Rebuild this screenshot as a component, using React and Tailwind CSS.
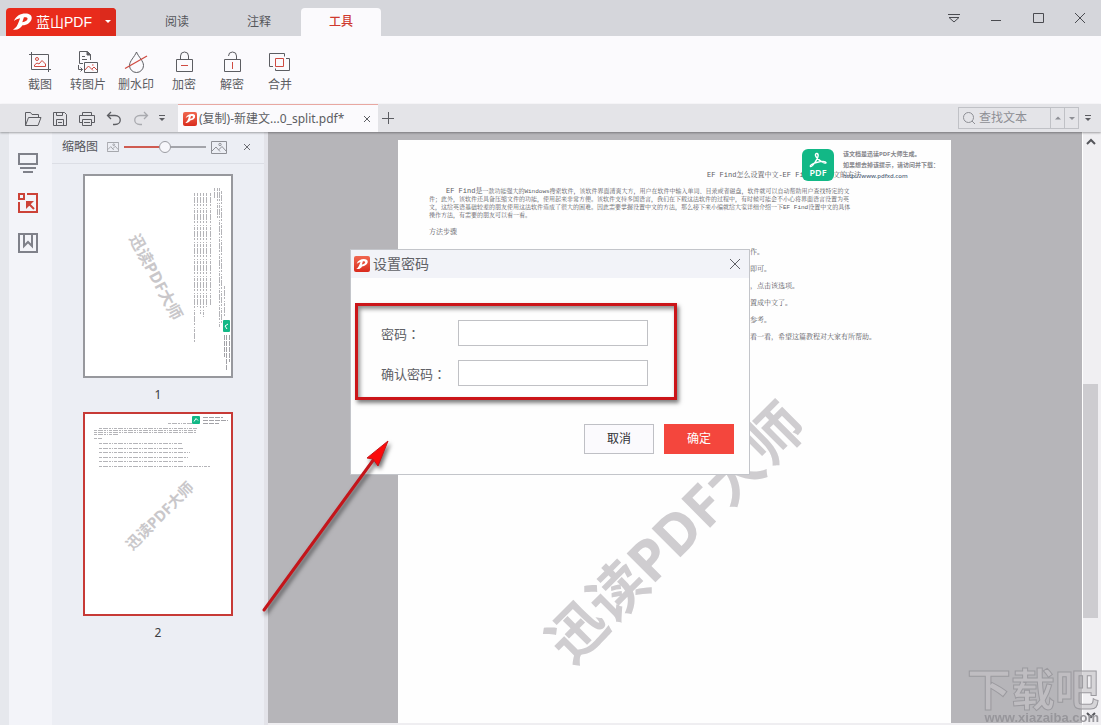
import { useState } from "react";

const WATERMARK = "迅读PDF大师";

/* ---------- icons ---------- */

function Icon({ size = 24, className = "", children }) {
  return (
    <svg
      width={size}
      height={size}
      viewBox={`0 0 ${size} ${size}`}
      fill="none"
      stroke="currentColor"
      className={className}
      aria-hidden="true"
    >
      {children}
    </svg>
  );
}

function LogoMark({ className }) {
  return (
    <svg viewBox="0 0 20 18" fill="currentColor" className={className} aria-hidden="true">
      <path
        fillRule="evenodd"
        d="M1 8C3 2.5 8 0 13 0c5 0 7.500 2.500 6.500 6-1 3.500-4.500 6-9.500 6.500C8 16 4 18 0 17c3-1.500 4.500-4 6-8l1.500-4C5 5.500 3 6.500 1 8zM11.500 4L9.800 9.200c3-.3 5-1.700 5.500-3.400.4-1.300-1.500-2-3.800-1.800z"
      />
    </svg>
  );
}

function AppBadge({ className }) {
  return (
    <span
      className={`flex shrink-0 items-center justify-center rounded-xs bg-linear-to-b from-[#f0664f] to-[#d9291c] text-white ${className}`}
    >
      <LogoMark className="h-2/3 w-3/4" />
    </span>
  );
}

function PdfStamp({ className }) {
  return (
    <svg viewBox="0 0 32 32" className={className} aria-hidden="true">
      <rect width="32" height="32" rx="6" fill="#12b886" />
      <path
        d="M15 4.500c2.500 1 .5 5-1.500 8C12 15 9.500 18 8.500 17.500c-1-1 2-3 6-4s9-1.500 9.500 0c.3 1-2 .8-4-.5S14 8.500 13.500 6.500c-.3-1.200.5-2.300 1.500-2z"
        fill="none"
        stroke="#fff"
        strokeWidth="1.400"
      />
      <text
        x="16"
        y="27"
        fill="#fff"
        fontSize="9"
        fontWeight="600"
        textAnchor="middle"
        fontFamily="Noto Sans, sans-serif"
      >
        PDF
      </text>
    </svg>
  );
}

const tools = [
  {
    label: "截图",
    icon: (
      <Icon>
        <path d="M3.5 2v17.500H23M1 4.500h19.500V22" />
        <g stroke="#cf4a41">
          <circle cx="9" cy="9" r="1.500" />
          <path d="M6.500 16.500h11v-2.500l-3.500-3.500-3 3.500-2-1-2.500 2z" />
        </g>
      </Icon>
    ),
  },
  {
    label: "转图片",
    icon: (
      <Icon>
        <path d="M7 13.500H3.500v-12h8l3 3v5.500M6 6.500h3M6 9.500h5" />
        <path d="M11 1.500v3.500h3.500z" fill="currentColor" />
        <path d="M8.500 12.500h13v10h-13zM2.500 15v4.500h4M4.500 17.500l2 2-2 2" />
        <path d="M9 20l3.500-4 4.500 4.500M16 19l2-2 3 3" stroke="#cf4a41" />
        <path d="M16 15h1.500" stroke="#cf4a41" />
      </Icon>
    ),
  },
  {
    label: "删水印",
    icon: (
      <Icon>
        <path d="M12.500 2C10.500 7 5.500 11 5.500 15.500a7 7 0 0 0 14 0C19.500 11 14.500 7 12.500 2z" />
        <path d="M1 18.500L23 6" stroke="#cf4a41" strokeWidth="1.300" />
      </Icon>
    ),
  },
  {
    label: "加密",
    icon: (
      <Icon>
        <path d="M4.500 9.500h16v12h-16zM8.500 9.500V6a4 4 0 0 1 8 0v3.500" />
        <path d="M9 15.500h7" stroke="#cf4a41" />
      </Icon>
    ),
  },
  {
    label: "解密",
    icon: (
      <Icon>
        <path d="M4.500 9.500h16v12h-16zM8.500 6a4 4 0 0 1 8 0v3.500" />
        <path d="M12.500 12v7" stroke="#cf4a41" />
      </Icon>
    ),
  },
  {
    label: "合并",
    icon: (
      <Icon>
        <path d="M5 16.500H1.500v-13h15v3M18 8.500h3.500v12h-14v-2" />
        <path d="M7.500 8.500h8v8h-8z" stroke="#cf4a41" />
      </Icon>
    ),
  },
];

const quickActions = [
  {
    label: "打开",
    icon: (
      <Icon size={18}>
        <path d="M1.500 15.500v-13h5l1.500 2h6.500v3M1.500 15.500l3-8h12.500l-3 8z" />
      </Icon>
    ),
  },
  {
    label: "保存",
    icon: (
      <Icon size={18}>
        <path d="M2.500 2.500h11l2 2v11h-13zM5.500 2.500v3h6v-3M5.500 15.500v-6h7v6M7 12.500h4" />
      </Icon>
    ),
  },
  {
    label: "打印",
    icon: (
      <Icon size={18}>
        <path d="M4.500 5.500v-3h9v3M4.500 12.500h-3v-7h15v7h-3M4.500 9.500h9v6h-9zM6 12.500h6" />
      </Icon>
    ),
  },
  {
    label: "撤销",
    icon: (
      <Icon size={18}>
        <path d="M6 2L2.500 5.500 6 9M2.500 5.500H10c7 0 7 9 0 9H8" strokeWidth="1.300" />
      </Icon>
    ),
  },
  {
    label: "重做",
    icon: (
      <Icon size={18} className="text-[#a9aaaf]">
        <path d="M12 2l3.500 3.500L12 9M15.500 5.500H8c-7 0-7 9 0 9h2" strokeWidth="1.300" />
      </Icon>
    ),
  },
];

function MoreIcon() {
  return (
    <Icon size={8}>
      <path d="M1 1.500h6" />
      <path d="M1 4h6L4 7z" fill="currentColor" stroke="none" />
    </Icon>
  );
}

function CloseIcon({ size }) {
  const end = size - 1;
  return (
    <Icon size={size}>
      <path d={`M1 1L${end} ${end}M${end} 1L1 ${end}`} />
    </Icon>
  );
}

function PictureIcon({ className }) {
  return (
    <svg viewBox="0 0 16 13" fill="none" stroke="currentColor" className={className} aria-hidden="true">
      <path d="M.5.5h15v12H.5zM1 10l4-4 4 4.500M7.500 9L11 5.500 15 10" />
      <circle cx="9" cy="3.500" r="1.200" />
    </svg>
  );
}

/* ---------- top bars ---------- */

function TitleBar() {
  const [active, setActive] = useState("工具");

  return (
    <header className="flex h-9 shrink-0 items-end bg-[#d5d6db] pl-1.5">
      <button className="flex h-7 w-[110px] overflow-hidden rounded-t-sm bg-[#e92b1b] text-sm text-white">
        <span className="flex h-full flex-1 items-center gap-1 pl-[7px] leading-5">
          <LogoMark className="h-[18px] w-[19px]" />
          <span className="font-['Liberation_Sans','Noto_Sans_CJK_SC',sans-serif] whitespace-nowrap">
            蓝山PDF
          </span>
        </span>
        <span className="flex h-full w-4 items-center justify-center bg-[#dc2a1c]">
          <Icon size={6}>
            <path d="M0 1h6L3 4z" fill="currentColor" stroke="none" />
          </Icon>
        </span>
      </button>

      <nav className="ml-[21px] flex gap-0.5">
        {["阅读", "注释", "工具"].map((tab) => (
          <button
            key={tab}
            onClick={() => setActive(tab)}
            className={`h-7 w-20 rounded-t text-xs ${
              active === tab ? "bg-[#fbfafd] font-medium text-[#cf3a30]" : "text-[#55565b]"
            }`}
          >
            {tab}
          </button>
        ))}
      </nav>

      <div className="ml-auto flex self-stretch text-[#4a4b50]">
        <button aria-label="选项" className="flex w-[42px] items-center justify-center">
          <Icon size={12}>
            <path d="M0 2.500h12M1 5.500h10L6 10z" />
          </Icon>
        </button>
        <button aria-label="最小化" className="flex w-[42px] items-center justify-center">
          <Icon size={12}>
            <path d="M1 8.500h10" />
          </Icon>
        </button>
        <button aria-label="最大化" className="flex w-[42px] items-center justify-center">
          <Icon size={12}>
            <path d="M1.500 1.500h10v9h-10z" />
          </Icon>
        </button>
        <button aria-label="关闭" className="flex w-[42px] items-center justify-center">
          <CloseIcon size={12} />
        </button>
      </div>
    </header>
  );
}

function Ribbon() {
  return (
    <div className="flex h-17 shrink-0 bg-[#fbfafd] pt-3.5 pl-4 text-[#5c5d62]">
      {tools.map((tool) => (
        <button key={tool.label} className="flex w-12 flex-col items-center gap-[3px]">
          {tool.icon}
          <span className="text-xs leading-4 whitespace-nowrap">{tool.label}</span>
        </button>
      ))}
    </div>
  );
}

function Toolbar() {
  return (
    <div className="z-10 flex h-7 shrink-0 items-stretch bg-[#e4e4e8] pl-[19px] text-[#5c5d62] shadow-[0_1px_2px_#00000055]">
      {quickActions.map((action) => (
        <button
          key={action.label}
          aria-label={action.label}
          className="flex w-[27px] items-center justify-center pt-0.5"
        >
          {action.icon}
        </button>
      ))}
      <button aria-label="更多" className="flex w-4 items-center justify-center">
        <MoreIcon />
      </button>

      <div className="ml-2 flex w-[200px] items-center border-t border-[#e8a7a1] bg-[#fbfafd] pr-1.5 pl-[5px]">
        <AppBadge className="size-3.5" />
        <span className="ml-0.5 flex-1 text-xs whitespace-nowrap">(复制)-新建文...0_split.pdf*</span>
        <button aria-label="关闭标签" className="flex w-2.5 justify-center">
          <CloseIcon size={8} />
        </button>
      </div>
      <button aria-label="新建标签" className="flex w-5 items-center justify-center">
        <Icon size={12}>
          <path d="M0 6.500h12M6.500 0v12" />
        </Icon>
      </button>

      <form className="my-[3px] ml-auto flex w-[121px] border border-[#c0c1c6] text-[#8e8f95]">
        <label htmlFor="find" className="flex w-5 shrink-0 items-center justify-center">
          <Icon size={14}>
            <circle cx="6.500" cy="6.500" r="5" />
            <path d="M10 10l3 3" />
          </Icon>
        </label>
        <input
          id="find"
          placeholder="查找文本"
          className="w-0 min-w-0 flex-1 text-xs outline-none placeholder:text-[#8e8f95]"
        />
        <button type="button" aria-label="上一个" className="flex w-3.5 items-center justify-center border-l border-[#c0c1c6]">
          <Icon size={6}>
            <path d="M0 4.500h6L3 1.500z" fill="currentColor" stroke="none" />
          </Icon>
        </button>
        <button type="button" aria-label="下一个" className="flex w-3.5 items-center justify-center border-l border-[#c0c1c6]">
          <Icon size={6}>
            <path d="M0 2h6L3 5z" fill="currentColor" stroke="none" />
          </Icon>
        </button>
      </form>
      <button aria-label="查找选项" className="mr-1 flex w-[18px] items-center justify-center">
        <MoreIcon />
      </button>
    </div>
  );
}

/* ---------- left side ---------- */

function SideNav() {
  return (
    <nav className="flex w-[52px] shrink-0 flex-col items-center gap-5 border-l-[9px] border-[#e6e8ed] bg-[#f3f4f9] pt-[21px] pr-1.5 text-[#7f818a]">
      <button aria-label="页面">
        <Icon size={20}>
          <path d="M1 1h18v10H1zM2 15h16M5 19h10" strokeWidth="2" />
        </Icon>
      </button>
      <button aria-label="缩略图" className="text-[#cc4238]">
        <Icon size={20}>
          <path d="M1 1h5v5H1zM9 1h10v18H1V9M16 16L10 10" strokeWidth="2" />
          <path d="M8 8h8l-8 8z" fill="currentColor" stroke="none" />
        </Icon>
      </button>
      <button aria-label="书签">
        <Icon size={20}>
          <path d="M1 1h18v18H1zM6 1v12l4-4 4 4V1" strokeWidth="2" />
        </Icon>
      </button>
    </nav>
  );
}

// text rows of the upright miniature: [start, end, y]
const uprightRows = [
  [83, 108, 9],
  [14, 112, 14],
  [9, 112, 16],
  [9, 112, 18],
  [9, 33, 20],
  [9, 17, 24],
  [14, 97, 29],
  [14, 98, 34],
  [14, 105, 38],
  [14, 103, 43],
  [14, 98, 47],
  [14, 125, 52],
];

// text columns of the turned miniature: [start, end, x]
const turnedRows = [
  [17, 168, 109],
  [17, 131, 112],
  [17, 138, 115],
  [17, 141, 118],
  [17, 131, 121],
  [17, 129, 125],
  [12, 22, 129],
  [12, 44, 132],
  [12, 152, 134],
  [15, 149, 136],
  [110, 142, 139],
];

function UprightMini() {
  return (
    <>
      <g stroke="#b4b4b8" strokeDasharray="3 1 5 1 2 1 1 1">
        {uprightRows.map(([start, end, y]) => (
          <path key={y} d={`M${start} ${y}.5H${end}`} />
        ))}
      </g>
      <path d="M118 3.500h20M118 6.500h25M118 9.500h16" stroke="#a2a2a7" strokeDasharray="5 1" />
      <rect x="107" y="2" width="8" height="8" rx="1" fill="#12b886" />
      <path d="M109 7.500l2-3 2 2" fill="none" stroke="#fff" />
    </>
  );
}

function TurnedMini() {
  return (
    <>
      <g stroke="#b4b4b8" strokeDasharray="3 1 6 1 2 2 1 1">
        {turnedRows.map(([start, end, x]) => (
          <path key={x} d={`M${x}.5 ${start}V${end}`} />
        ))}
      </g>
      <path d="M144.500 159v27M141.500 159v36M139.500 159v22" stroke="#a2a2a7" strokeDasharray="5 1" />
      <rect x="138" y="144" width="7" height="12" rx="1" fill="#12b886" />
      <path d="M143 148l-3 2 2 3" fill="none" stroke="#fff" />
    </>
  );
}

function Thumbnail({ page, turned, selected, onSelect }) {
  return (
    <figure className="flex flex-col items-center">
      <button
        onClick={onSelect}
        aria-label={`第${page}页`}
        className={`relative h-[204px] w-[150px] overflow-hidden border-2 bg-white ${
          selected ? "border-[#c73a36]" : "border-[#97989d]"
        }`}
      >
        <svg viewBox="0 0 146 200" className="size-full" aria-hidden="true">
          {turned ? <TurnedMini /> : <UprightMini />}
        </svg>
        <span
          className={`absolute inset-0 flex items-center justify-center pt-1 font-bold text-[#c9c7ca] ${
            turned ? "rotate-62 text-base" : "-rotate-45 text-[15px]"
          }`}
        >
          {WATERMARK}
        </span>
      </button>
      <figcaption className="mt-[9px] h-[25px] text-xs text-[#3c3d41]">{page}</figcaption>
    </figure>
  );
}

function ThumbnailPanel() {
  const [selected, setSelected] = useState(2);

  return (
    <aside className="flex w-[216px] shrink-0 flex-col border-r-4 border-[#e3e3e9] bg-[#eceef4]">
      <div className="flex h-8 shrink-0 items-center border-b border-[#dcdee5] pr-3 pb-px pl-2.5 text-[#8f9096]">
        <label htmlFor="thumb-size" className="mr-[9px] text-xs text-[#55565b]">
          缩略图
        </label>
        <PictureIcon className="h-2.5 w-3" />
        <input
          id="thumb-size"
          type="range"
          defaultValue="50"
          className="mx-[5px] h-0.5 w-[82px] appearance-none bg-linear-to-r from-[#cf5b51] from-50% to-[#a3a4aa] to-50% [&::-webkit-slider-thumb]:size-3 [&::-webkit-slider-thumb]:appearance-none [&::-webkit-slider-thumb]:rounded-full [&::-webkit-slider-thumb]:border [&::-webkit-slider-thumb]:border-[#9c9da3] [&::-webkit-slider-thumb]:bg-[#f7f7fb]"
        />
        <PictureIcon className="h-[13px] w-4" />
        <button aria-label="关闭面板" className="ml-auto flex w-2.5 justify-center text-[#6b6c72]">
          <CloseIcon size={8} />
        </button>
      </div>
      <div className="flex flex-col items-center pt-2.5">
        <Thumbnail page={1} turned selected={selected === 1} onSelect={() => setSelected(1)} />
        <Thumbnail page={2} selected={selected === 2} onSelect={() => setSelected(2)} />
      </div>
    </aside>
  );
}

/* ---------- document ---------- */

const steps = [
  "作。",
  "即可。",
  "，点击该选项。",
  "置成中文了。",
  "参考。",
  "看一看，希望这篇教程对大家有所帮助。",
];

function DocumentPage() {
  return (
    <article className="relative mx-auto h-[783px] w-[553px] max-w-full bg-[#fefefe] pt-[30px] pl-[31px] font-['Liberation_Mono','Noto_Serif_CJK_SC','Noto_Sans_CJK_SC',monospace] text-[6px] leading-[8px] whitespace-nowrap text-[#5a5a5e]">
      <h1 className="pl-[278px] text-[7px] leading-[10px]">
        EF Find怎么设置中文-EF Find设置中文的方法
      </h1>
      <p className="mt-[7px] indent-[17px]">
        <span className="text-[7px]">EF Find是</span>
        一款功能强大的Windows搜索软件，该软件界面清爽大方，用户在软件中输入单词、目录或者磁盘，软件就可以自动帮助用户查找特定的文
      </p>
      <p>
        件；此外，该软件还具备压缩文件的功能，使用起来非常方便。该软件支持多国语言，我们在下载这法软件的过程中，有时候可能会不小心将界面语言设置为英
      </p>
      <p>
        文，这给英语基础较差的朋友使用这法软件造成了很大的困难。因此需要掌握设置中文的方法，那么接下来小编就给大家详细介绍一下EF Find设置中文的具体
      </p>
      <p>操作方法，有需要的朋友可以看一看。</p>
      <h2 className="mt-[7px] text-[7px] leading-[10px]">方法步骤</h2>
      <ol className="mt-[7px] pl-[321px] text-[7px] leading-[17px]">
        {steps.map((step) => (
          <li key={step}>{step}</li>
        ))}
      </ol>

      <div className="absolute top-[9px] right-2 flex gap-[9px] font-['Noto_Sans','Noto_Sans_CJK_SC',sans-serif] font-bold text-[#85858a]">
        <PdfStamp className="size-8" />
        <div className="w-[100px] leading-[11px]">
          <p>该文档是迅读PDF大师生成。</p>
          <p>如果想去掉该提示，请访问并下载：</p>
          <a href="#download" className="block font-medium text-[#4f5f78]">
            http://www.pdfxd.com
          </a>
        </div>
      </div>
      <div className="absolute inset-0 flex -rotate-45 items-center justify-center font-['Noto_Sans','Noto_Sans_CJK_SC',sans-serif] text-[57px] font-bold text-[#cfcdd0]">
        {WATERMARK}
      </div>
    </article>
  );
}

function Scrollbar() {
  return (
    <div className="flex w-[19px] shrink-0 flex-col items-center border-l border-white bg-[#f0eff2] pr-0.5 text-[#55565b]">
      <button aria-label="向上滚动" className="flex h-5 items-center">
        <Icon size={10}>
          <path d="M1 7l4-4 4 4" strokeWidth="2" />
        </Icon>
      </button>
      <div className="flex w-full flex-1 flex-col">
        <div className="flex-[232]" />
        <div className="w-[15px] flex-[234] bg-[#cdccd0]" />
        <div className="flex-[87]" />
      </div>
      <button aria-label="向下滚动" className="flex h-5 items-center">
        <Icon size={10}>
          <path d="M1 3l4 4 4-4" strokeWidth="2" />
        </Icon>
      </button>
    </div>
  );
}

/* ---------- dialog ---------- */

function PasswordField({ id, label }) {
  return (
    <div className="flex items-center">
      <label htmlFor={id} className="w-[77px] pt-0.5">
        {label}
        <span className="font-['Noto_Sans_CJK_TC',sans-serif]" lang="zh-TW">：</span>
      </label>
      <input
        id={id}
        type="password"
        className="h-[26px] w-[190px] border border-[#c0c1c5] bg-white px-1 outline-none"
      />
    </div>
  );
}

function PasswordDialog() {
  return (
    <div className="fixed inset-0 z-20 flex items-center justify-center pr-px pb-px">
      <form
        role="dialog"
        aria-labelledby="dialog-title"
        className="relative w-[400px] border border-[#c3c5ca] bg-[#fefefe] text-[#606166]"
      >
        <div className="flex h-7 items-center bg-[#f2f3f8] pr-2 pl-[3px]">
          <AppBadge className="size-4" />
          <h2 id="dialog-title" className="ml-[3px] text-sm">
            设置密码
          </h2>
          <button type="button" aria-label="关闭" className="ml-auto">
            <CloseIcon size={12} />
          </button>
        </div>

        <div className="mt-[25px] ml-1 flex w-[322px] flex-col gap-3.5 border-3 border-[#cb1519] pt-3.5 pb-[11px] pl-[23px] text-[13px] shadow-[2px_3px_4px_#00000080,inset_2px_3px_4px_#00000070]">
          <PasswordField id="password" label="密码" />
          <PasswordField id="confirm" label="确认密码" />
        </div>

        <div className="flex justify-end gap-2.5 pt-6 pr-[15px] pb-5 text-xs">
          <button type="button" className="h-[30px] w-[70px] border border-[#bfc0c5] bg-[#fbfafd] text-[#2f3034]">
            取消
          </button>
          <button type="button" className="h-[30px] w-[70px] bg-[#f4463d] text-white">
            确定
          </button>
        </div>

        {/* pointer to the password fields */}
        <svg
          width="150"
          height="190"
          viewBox="0 0 150 190"
          className="pointer-events-none absolute top-[180px] -left-24 drop-shadow-[2px_3px_2px_#00000090]"
          aria-hidden="true"
        >
          <path d="M9 180L119 29" stroke="#c4161b" strokeWidth="3" strokeLinecap="round" />
          <path d="M133 11l-21 17 6 1 5 7z" fill="#fb0a0a" stroke="#c4161b" strokeWidth="1" />
        </svg>
      </form>
    </div>
  );
}

function SiteMark() {
  return (
    <div className="pointer-events-none fixed right-0.5 bottom-0 z-30 flex flex-col items-end font-bold text-[#c4c3c7]/60">
      <span className="text-[44px] leading-[44px] [-webkit-text-stroke:1px_#9b9a9f]">下载吧</span>
      <span className="font-['Liberation_Sans',sans-serif] text-[13px] leading-[14px] text-[#97969b]">
        www.xiazaiba.com
      </span>
    </div>
  );
}

export default function App() {
  return (
    <div className="flex h-screen flex-col overflow-hidden font-['Noto_Sans','Noto_Sans_CJK_SC',sans-serif]">
      <TitleBar />
      <Ribbon />
      <Toolbar />
      <div className="flex min-h-0 flex-1">
        <SideNav />
        <ThumbnailPanel />
        <main className="min-w-0 flex-1 overflow-hidden border-b-2 border-[#efeef1] bg-[#b6b5b9] pt-2 pr-px">
          <DocumentPage />
        </main>
        <Scrollbar />
      </div>
      <PasswordDialog />
      <SiteMark />
    </div>
  );
}
